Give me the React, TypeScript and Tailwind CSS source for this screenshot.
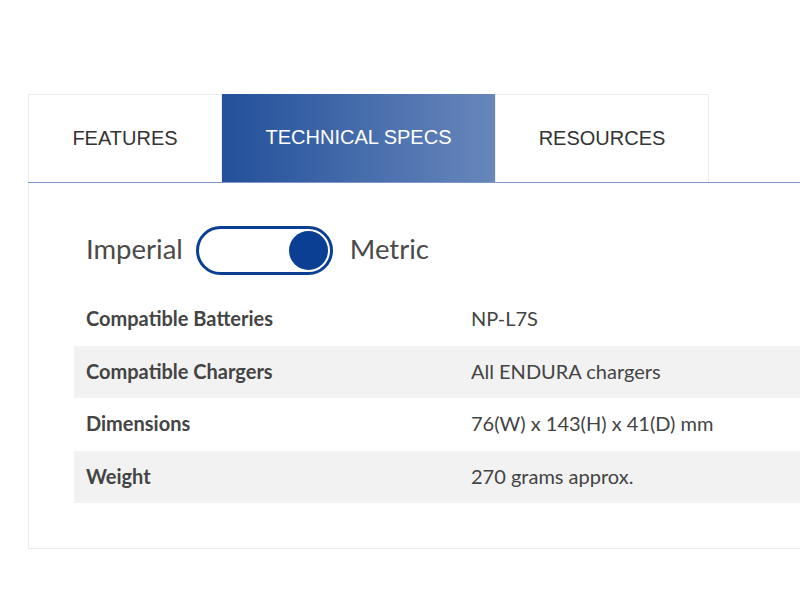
const specs = [
  { label: 'Compatible Batteries', value: 'NP-L7S' },
  { label: 'Compatible Chargers', value: 'All ENDURA chargers' },
  { label: 'Dimensions', value: '76(W) x 143(H) x 41(D) mm' },
  { label: 'Weight', value: '270 grams approx.' },
]

const tabs = [
  { name: 'FEATURES', width: 'w-[194px]' },
  { name: 'TECHNICAL SPECS', width: 'w-[273px]' },
  { name: 'RESOURCES', width: 'w-[214px]' },
]

export default function App() {
  return (
    <div className="h-[600px] w-[800px] overflow-hidden bg-white">
      <div className="ml-[28px] mt-[94px] w-[820px]">
        <div className="flex h-[89px] border-b border-[#7b98c8]">
          {tabs.map((tab, i) =>
            i === 1 ? (
              <div
                key={tab.name}
                className={`${tab.width} flex items-center justify-center bg-gradient-to-r from-[#22509a] to-[#6887bb] pb-[2px] font-['Liberation_Sans',Arial,sans-serif] text-[20px] text-white`}
              >
                {tab.name}
              </div>
            ) : (
              <div
                key={tab.name}
                className={`${tab.width} flex items-center justify-center border-x border-t border-[#ececec] pb-[2px] font-['Liberation_Sans',Arial,sans-serif] text-[20px] text-[#333]`}
              >
                {tab.name}
              </div>
            ),
          )}
        </div>
        <div className="h-[366px] border-b border-l border-[#ececec] pl-[45px] pt-[42px] font-['Lato',sans-serif]">
          <div className="flex h-[50px] items-center pl-[12px] text-[27.5px] text-[#4a4a4a]">
            <span className="-mt-[3px]">Imperial</span>
            <div className="ml-[13px] mr-[17px] flex h-[49px] w-[137px] items-center justify-end rounded-full border-[3px] border-[#0a3f94] pr-[2px]">
              <div className="size-[39px] rounded-full bg-[#0a3f94]" />
            </div>
            <span className="-mt-[3px]">Metric</span>
          </div>
          <div className="mt-[18px]">
            {specs.map((row, i) => (
              <div
                key={row.label}
                className={`flex h-[52.5px] items-center pb-[2px] text-[20px] text-[#444] ${i % 2 === 1 ? 'bg-[#f2f2f2]' : ''}`}
              >
                <div className="w-[397px] pl-[12px] font-bold">{row.label}</div>
                <div>{row.value}</div>
              </div>
            ))}
          </div>
        </div>
      </div>
    </div>
  )
}
